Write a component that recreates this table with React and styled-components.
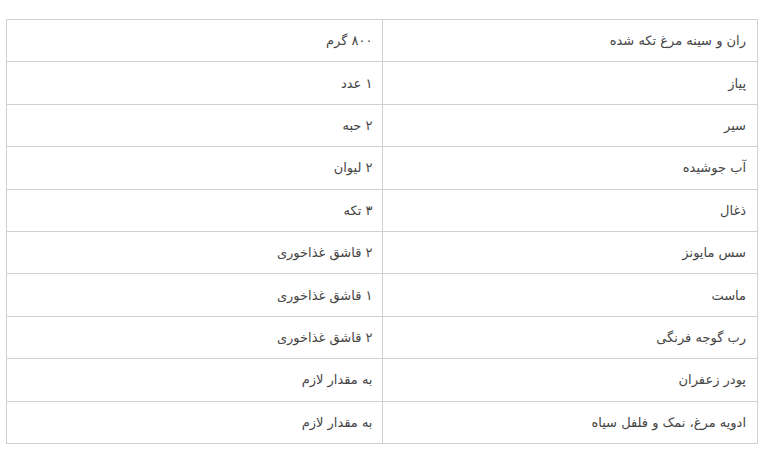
import React from 'react';
import styled, { createGlobalStyle } from 'styled-components';

const GlobalStyle = createGlobalStyle`
    body {
        margin: 0;
        background: #ffffff;
    }
`

const Page = styled.div`
    padding: 19px 13px 0 7px;
    direction: rtl;
    font-family: "DejaVu Sans", "Noto Sans", sans-serif;
`

const Table = styled.table`
    width: 752px;
    border-collapse: collapse;
    table-layout: fixed;
`

const Row = styled.tr`
    height: 42.4px;
`

const Cell = styled.td`
    border: 1px solid #d0d0d0;
    padding: 0 ${props => props.amount ? '9px' : '11px'} 0 10px;
    text-align: right;
    vertical-align: middle;
    font-size: 13px;
    color: #454545;
    white-space: nowrap;
`

const rows = [
    ['ران و سینه مرغ تکه شده', '۸۰۰ گرم'],
    ['پیاز', '۱ عدد'],
    ['سیر', '۲ حبه'],
    ['آب جوشیده', '۲ لیوان'],
    ['ذغال', '۳ تکه'],
    ['سس مایونز', '۲ قاشق غذاخوری'],
    ['ماست', '۱ قاشق غذاخوری'],
    ['رب گوجه فرنگی', '۲ قاشق غذاخوری'],
    ['پودر زعفران', 'به مقدار لازم'],
    ['ادویه مرغ، نمک و فلفل سیاه', 'به مقدار لازم'],
];

const App = () => {
    return (
        <>
            <GlobalStyle />
            <Page>
                <Table>
                    <tbody>
                        {rows.map(([name, amount]) => (
                            <Row key={name}>
                                <Cell>{name}</Cell>
                                <Cell amount>{amount}</Cell>
                            </Row>
                        ))}
                    </tbody>
                </Table>
            </Page>
        </>
    );
}

export default App;
